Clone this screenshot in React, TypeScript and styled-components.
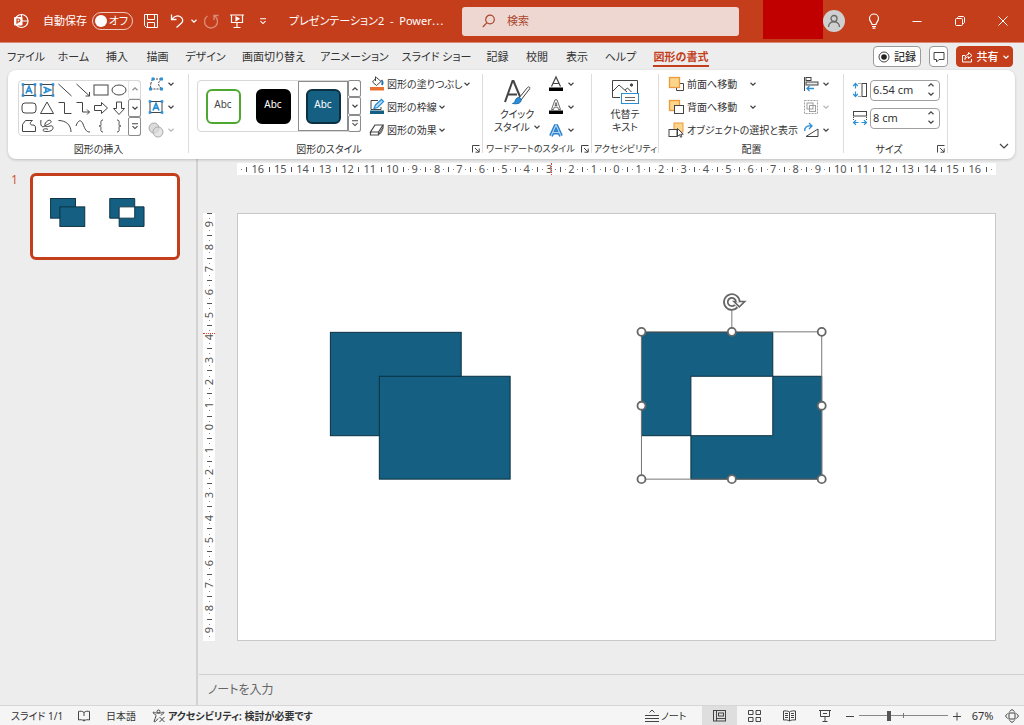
import React from 'react';
import styled, { createGlobalStyle, css } from 'styled-components';

const GlobalStyle = createGlobalStyle`
  *, *::before, *::after { box-sizing: border-box; }
  body {
    margin: 0;
    background: #ededed;
    color: #333;
    font: 11px/14px 'Noto Sans', 'Noto Sans CJK JP', sans-serif;
    font-feature-settings: 'palt' 1;
  }
  button, input {
    font: inherit;
    font-feature-settings: inherit;
    color: inherit;
  }
  svg { display: block; flex: none; overflow: visible; }
`;

const ink = '#444';
const blue = '#2b8fd6';
const accent = '#c43e1c';
const shapeFill = '#156082';

const Page = styled.div`
  display: flex;
  flex-direction: column;
  min-height: 100vh;
`;

const bareButton = css`
  display: flex;
  align-items: center;
  justify-content: center;
  margin: 0;
  padding: 0;
  border: 0;
  background: none;
  white-space: nowrap;
`;

/* ---------- title bar ---------- */

const TitleBar = styled.header`
  display: flex;
  align-items: center;
  height: 43px;
  flex: none;
  padding-left: 13px;
  background: ${accent};
  border-bottom: 1px solid #d98a73;
  color: #fff;
  white-space: nowrap;
`;

const AutoSave = styled.label`
  display: flex;
  align-items: center;
  width: 109px;
  padding-left: 14px;
`;

const AutoSaveText = styled.span`
  width: 49px;
`;

const SwitchBox = styled.span`
  position: relative;
  display: flex;
  align-items: center;
  justify-content: flex-end;
  width: 41px;
  height: 18px;
  padding-right: 4px;
  border: 1px solid #f0c9bd;
  border-radius: 9px;
`;

const SwitchInput = styled.input`
  appearance: none;
  position: absolute;
  left: 2px;
  top: 2px;
  width: 12px;
  height: 12px;
  margin: 0;
  border-radius: 50%;
  background: #fff;
`;

const QuickButton = styled.button<{ $w?: number; $dim?: boolean }>`
  ${bareButton}
  width: ${p => p.$w ?? 26}px;
  height: 26px;
  opacity: ${p => (p.$dim ? 0.4 : 1)};
`;

const DocTitle = styled.h1`
  width: 186px;
  margin: 0;
  padding-left: 13px;
  font-size: 11px;
  font-weight: 400;
  white-space: pre;
`;

const SearchBox = styled.label`
  display: flex;
  align-items: center;
  gap: 12px;
  flex: 1;
  min-width: 120px;
  height: 29px;
  padding-left: 20px;
  border-radius: 3px;
  background: #efd7d1;
  color: #a8452c;
`;

const SearchInput = styled.input`
  flex: 1;
  min-width: 0;
  border: 0;
  padding: 0;
  background: none;
  outline: none;
  &::placeholder { color: #a8452c; opacity: 1; }
`;

const AccountName = styled.div`
  align-self: flex-start;
  width: 60px;
  height: 39px;
  margin-left: 24px;
  background: #c00000;
`;

const Avatar = styled.button`
  ${bareButton}
  width: 22px;
  height: 22px;
  margin-right: 7px;
  border-radius: 50%;
  background: #cfcfcf;
`;

const WindowButton = styled.button`
  ${bareButton}
  width: 43px;
  height: 42px;
`;

/* ---------- tabs ---------- */

const TabBar = styled.nav`
  display: flex;
  align-items: center;
  height: 27px;
  flex: none;
  padding: 0 11px;
`;

const TabList = styled.div`
  display: flex;
  flex: 1;
  gap: 18px;
`;

const Tab = styled.button<{ $w: number; $active?: boolean }>`
  ${bareButton}
  width: ${p => p.$w}px;
  height: 20px;
  flex: none;
  padding-top: 2px;
  border-bottom: 2px solid ${p => (p.$active ? accent : 'transparent')};
  color: ${p => (p.$active ? accent : '#333')};
  font-weight: ${p => (p.$active ? 700 : 400)};
`;

const PillRow = styled.div`
  display: flex;
  gap: 8px;
`;

const Pill = styled.button<{ $w: number; $solid?: boolean }>`
  ${bareButton}
  gap: 4px;
  width: ${p => p.$w}px;
  height: 21px;
  border: 1px solid ${p => (p.$solid ? accent : '#9a9a9a')};
  border-radius: 4px;
  background: ${p => (p.$solid ? accent : '#fff')};
  color: ${p => (p.$solid ? '#fff' : '#333')};
  font-weight: 500;
`;

/* ---------- ribbon ---------- */

const Ribbon = styled.section`
  display: flex;
  height: 89px;
  flex: none;
  margin: 0 9px 0 8px;
  padding: 2px 0;
  border-radius: 8px;
  background: #fff;
  box-shadow: 0 1px 3px #0003;
  position: relative;
`;

const Group = styled.div<{ $w: number }>`
  position: relative;
  display: flex;
  flex-direction: column;
  width: ${p => p.$w}px;
  flex: none;
  &::after {
    content: '';
    position: absolute;
    right: 0;
    top: 2px;
    bottom: 4px;
    width: 1px;
    background: #dcdcdc;
  }
`;

const GroupBody = styled.div<{ $pad: number; $gap?: number }>`
  display: flex;
  align-items: flex-start;
  height: 70px;
  padding-left: ${p => p.$pad}px;
  gap: ${p => p.$gap ?? 8}px;
`;

const GroupLabel = styled.div<{ $small?: boolean }>`
  display: flex;
  align-items: center;
  justify-content: center;
  height: 14px;
  white-space: nowrap;
  font-size: ${p => (p.$small ? 9 : 10)}px;
`;

const LabelText = styled.span`
  flex: 1;
  display: flex;
  justify-content: center;
`;

const Launcher = styled.button`
  ${bareButton}
  width: 14px;
  height: 14px;
`;

const Stack = styled.div`
  display: flex;
  flex-direction: column;
  align-items: flex-start;
`;

const Command = styled.button<{ $w?: number; $gap?: number; $dim?: boolean }>`
  ${bareButton}
  justify-content: flex-start;
  gap: ${p => p.$gap ?? 4}px;
  height: 23px;
  width: ${p => (p.$w ? `${p.$w}px` : 'auto')};
  opacity: ${p => (p.$dim ? 0.7 : 1)};
  font-size: 10px;
`;

const CommandText = styled.span<{ $w?: number }>`
  width: ${p => (p.$w ? `${p.$w}px` : 'auto')};
  text-align: left;
`;

const Gallery = styled.div`
  display: flex;
  margin-top: 8px;
  border: 1px solid #d8d8d8;
  border-radius: 4px;
`;

const ShapeGrid = styled.div`
  display: grid;
  grid-template-columns: repeat(6, 18px);
  grid-auto-rows: 18px;
  padding-left: 1px;
`;

const ShapeButton = styled.button`
  ${bareButton}
`;

const Scroller = styled.div`
  display: grid;
  grid-template-rows: 1fr 1fr 1fr;
  width: 13px;
  margin: -1px -1px -1px 0;
`;

const ScrollButton = styled.button<{ $faint?: boolean }>`
  ${bareButton}
  border: 1px solid ${p => (p.$faint ? '#d8d8d8' : '#8c8c8c')};
  border-radius: 2px;
  opacity: ${p => (p.$faint ? 0.6 : 1)};
`;

const StyleCell = styled.button<{ $selected?: boolean }>`
  ${bareButton}
  width: 50px;
  height: 50px;
  border: 1px solid ${p => (p.$selected ? '#8c8c8c' : 'transparent')};
`;

const StyleSwatch = styled.span<{ $bg: string; $line: string; $fg: string }>`
  width: 35px;
  height: 35px;
  padding-top: 6px;
  border: 2px solid ${p => p.$line};
  border-radius: 6px;
  background: ${p => p.$bg};
  color: ${p => p.$fg};
  font-size: 10px;
  text-align: center;
`;

const BigButton = styled.button<{ $w: number }>`
  ${bareButton}
  flex-direction: column;
  justify-content: flex-start;
  width: ${p => p.$w}px;
  padding-top: 6px;
`;

const BigText = styled.span`
  display: flex;
  align-items: center;
  gap: 4px;
  height: 13px;
  font-size: 10px;
`;

const IconBox = styled.span`
  display: flex;
  height: 29px;
`;

const SizeRows = styled.div`
  padding-top: 4px;
`;

const SizeRow = styled.label`
  display: flex;
  align-items: center;
  gap: 2px;
  height: 28px;
`;

const SizeBox = styled.span`
  display: flex;
  width: 70px;
  height: 21px;
  border: 1px solid #a0a0a0;
  border-radius: 4px;
`;

const SizeInput = styled.input`
  width: 52px;
  border: 0;
  padding: 0 0 0 2px;
  background: none;
  font-size: 11px;
`;

const Spin = styled.span`
  display: grid;
  grid-template-rows: 9px 9px;
  width: 16px;
`;

const SpinButton = styled.button`
  ${bareButton}
`;

const Collapse = styled.button`
  ${bareButton}
  align-self: flex-end;
  width: 22px;
  height: 22px;
  margin-left: auto;
`;

/* ---------- workspace ---------- */

const Workspace = styled.main`
  display: flex;
  flex: 1;
`;

const SlideList = styled.aside`
  display: flex;
  align-items: flex-start;
  width: 198px;
  flex: none;
  padding: 14px 16px 0 11px;
  border-right: 2px solid #d2d2d2;
`;

const SlideNumber = styled.span`
  width: 19px;
  color: #d0593b;
  font-size: 12px;
`;

const Thumb = styled.button`
  display: block;
  flex: 1;
  padding: 0;
  border: 3px solid ${accent};
  border-radius: 6px;
  background: #fff;
`;

const Editor = styled.div`
  display: flex;
  flex-direction: column;
  flex: 1;
  min-width: 0;
`;

const Stage = styled.div`
  display: grid;
  grid-template-columns: 12px 1fr;
  grid-template-rows: 12px auto;
  column-gap: 22px;
  row-gap: 38px;
  flex: 1;
  align-content: start;
  padding: 4px 28px 32px 5px;
`;

const Ruler = styled.div<{ $vertical?: boolean }>`
  position: relative;
  display: flex;
  flex-direction: ${p => (p.$vertical ? 'column' : 'row')};
  grid-column: ${p => (p.$vertical ? 1 : 2)};
  padding: ${p => (p.$vertical ? '0' : '0 4px')};
  background: #fff;
  color: #555;
  font-size: 11px;
  line-height: 12px;
`;

const RulerCell = styled.span<{ $vertical?: boolean; $half?: boolean }>`
  display: flex;
  flex: ${p => (p.$half ? 0.5 : 1)} 1 0;
  flex-direction: ${p => (p.$vertical ? 'column' : 'row')};
  align-items: center;
  justify-content: space-between;
  min-width: 0;
  min-height: 0;
`;

const RulerNumber = styled(RulerCell)`
  justify-content: center;
`;

const Digit = styled.span<{ $vertical?: boolean }>`
  transform: ${p => (p.$vertical ? 'rotate(-90deg)' : 'none')};
`;

const Tick = styled.i<{ $vertical?: boolean }>`
  width: ${p => (p.$vertical ? 5 : 1)}px;
  height: ${p => (p.$vertical ? 1 : 5)}px;
  background: #555;
`;

const Dot = styled.i<{ $off?: boolean }>`
  width: 1px;
  height: 1px;
  background: ${p => (p.$off ? 'transparent' : '#888')};
`;

const TopMarker = styled.i`
  position: absolute;
  z-index: 1;
  left: 41.4%;
  top: 0;
  height: 100%;
  border-left: 1px dotted #f03a20;
`;

const SideMarker = styled.i`
  position: absolute;
  z-index: 1;
  top: 28%;
  left: 0;
  width: 100%;
  border-top: 1px dotted #f03a20;
`;

const Slide = styled.div`
  grid-column: 2;
  border: 1px solid #c9c9c9;
  background: #fff;
`;

const Notes = styled.div`
  display: flex;
  align-items: center;
  height: 31px;
  margin-left: 1px;
  padding-left: 9px;
  border-top: 1px solid #cfcfcf;
`;

const NotesInput = styled.input`
  flex: 1;
  border: 0;
  padding: 0;
  background: none;
  font-size: 12px;
  &::placeholder { color: #666; opacity: 1; }
`;

/* ---------- status bar ---------- */

const StatusBar = styled.footer`
  display: flex;
  align-items: center;
  height: 20px;
  flex: none;
  padding-left: 11px;
  border-top: 1px solid #d6d6d6;
  background: #f5f5f5;
  white-space: nowrap;
`;

const StatusItem = styled.button<{ $w: number; $bold?: boolean }>`
  ${bareButton}
  justify-content: flex-start;
  gap: 2px;
  width: ${p => p.$w}px;
  height: 18px;
  font-weight: ${p => (p.$bold ? 600 : 400)};
  font-size: 10px;
`;

const StatusSpace = styled.span`
  flex: 1;
`;

const ViewButton = styled.button<{ $active?: boolean; $narrow?: boolean }>`
  ${bareButton}
  width: ${p => (p.$narrow ? 24 : 35)}px;
  height: 19px;
  background: ${p => (p.$active ? '#dedede' : 'none')};
`;

const ZoomButton = styled.button`
  ${bareButton}
  width: 16px;
  height: 18px;
`;

const ZoomSlider = styled.input`
  appearance: none;
  width: 89px;
  height: 12px;
  margin: 0 1px;
  background:
    linear-gradient(#777, #777) 50% 50% / 1px 5px no-repeat,
    linear-gradient(#888, #888) 50% 50% / 100% 1px no-repeat;
  &::-webkit-slider-thumb {
    appearance: none;
    width: 4px;
    height: 10px;
    background: #555;
  }
`;

const ZoomValue = styled.button`
  ${bareButton}
  width: 35px;
  font-size: 11px;
`;

/* ---------- icons ---------- */

type IconProps = {
  w?: number;
  h?: number;
  color?: string;
  sw?: number;
  children: React.ReactNode;
};

const Icon = ({ w = 16, h = 16, color = ink, sw = 1, children }: IconProps) => (
  <svg width={w} height={h} viewBox={`0 0 ${w} ${h}`} fill="none" stroke={color} strokeWidth={sw} aria-hidden="true">
    {children}
  </svg>
);

const Chevron = ({ color = ink }: { color?: string }) => (
  <Icon w={6} h={4} color={color} sw={1.2}>
    <path d="M.5.7 3 3.1 5.5.7" />
  </Icon>
);

const ChevronUp = () => (
  <Icon w={6} h={4} sw={1.2}>
    <path d="M.5 3.2 3 .8l2.5 2.4" />
  </Icon>
);

const ChevronBar = ({ color = ink }: { color?: string }) => (
  <Icon w={6} h={7} color={color} sw={1.1}>
    <path d="M0 .8h6M.5 3.2 3 5.6l2.5-2.4" />
  </Icon>
);

const LauncherIcon = () => (
  <Icon w={8} h={8}>
    <path d="M.5 7.5v-7h7M3 3l4 4M7.2 3.5v3.7H3.5" />
  </Icon>
);

const corners = (x1: number, y1: number, x2: number, y2: number) =>
  [[x1, y1], [x2, y1], [x1, y2], [x2, y2]].map(([x, y], i) => (
    <rect key={i} x={x - 1.3} y={y - 1.3} width="2.6" height="2.6" fill={blue} stroke="none" />
  ));

const TextBoxIcon = ({ rotated }: { rotated?: boolean }) => (
  <Icon>
    <rect x="2" y="2.5" width="12" height="11" />
    {corners(2, 2.5, 14, 13.5)}
    <path
      d="M5 11.5 8 4.5l3 7M6 9.2h4"
      stroke={blue}
      strokeWidth="1.7"
      transform={rotated ? 'rotate(90 8 8)' : undefined}
    />
  </Icon>
);

const shapeIcons: [string, React.ReactNode][] = [
  ['テキスト ボックス', <TextBoxIcon />],
  ['縦書きテキスト ボックス', <TextBoxIcon rotated />],
  ['線', <Icon><path d="M1.5 2 14.5 14" /></Icon>],
  ['線矢印', <Icon><path d="M1.5 2 14.5 14M10.5 14h4v-4" /></Icon>],
  ['正方形/長方形', <Icon><rect x="1" y="3" width="14" height="10" /></Icon>],
  ['楕円', <Icon><ellipse cx="8" cy="8" rx="7" ry="5" /></Icon>],
  ['角丸四角形', <Icon><rect x="1" y="3" width="14" height="10" rx="3" /></Icon>],
  ['三角形', <Icon><path d="M8 2 14.5 13.5h-13z" /></Icon>],
  ['カギ線コネクタ', <Icon><path d="M1.5 2.5h6v11h7" /></Icon>],
  ['カギ線矢印', <Icon><path d="M1.5 2.5h6V12h7M12 9.5l2.5 2.5-2.5 2.5" /></Icon>],
  ['右矢印', <Icon><path d="M1.5 5.5h7v-3L14.500 8l-6 5.500v-3h-7z" /></Icon>],
  ['下矢印', <Icon><path d="M5.5 2v6.500h-3l5.500 6 5.500-6h-3V2z" /></Icon>],
  ['フリーフォーム', <Icon><path d="M4.5 2.500h7c-3 2-3 4.500 0 4.500 2.500 0 3 1 3 3v3.500h-13V6.500z" /></Icon>],
  ['フリーハンド', <Icon><path d="M2 2c-1 6 1 8 4 6s7-3 6-5-5 0-6 3 2 3 5 2 4 2 2 4-8 2-9 .5 4-2.500 5-1" /></Icon>],
  ['円弧', <Icon><path d="M1.5 2.500C9 2.500 14 7 14 14" /></Icon>],
  ['曲線', <Icon><path d="M1 8C3 2 6 1 8 6s3 8 7 8" /></Icon>],
  ['左中かっこ', <Icon><path d="M10 2C7 2 8 5 8 6.500S7 8 6 8c1 0 2 0 2 1.500S7 14 10 14" /></Icon>],
  ['右中かっこ', <Icon><path d="M6 2c3 0 2 3 2 4.500S9 8 10 8c-1 0-2 0-2 1.500S9 14 6 14" /></Icon>],
];

const EditShapeIcon = () => (
  <Icon>
    <path d="M2.500 13C2.500 8 3 5 5 3" strokeDasharray="3 1" />
    <path d="M5 3h8.500M13.500 3c-4 4-4 5 0 10M2.500 13h11" strokeDasharray="2 1" />
    {corners(5, 3, 13.5, 3)}
    {corners(2.5, 13, 13.5, 13)}
  </Icon>
);

const MergeIcon = () => (
  <Icon color="#888">
    <circle cx="6" cy="6" r="5" fill="#ccc" />
    <circle cx="10" cy="10" r="5" fill="#ccc" fillOpacity=".7" />
  </Icon>
);

const FillIcon = () => (
  <Icon>
    <path d="M7.500 1.500 12 5.500 7.500 9.500 3.500 6zM6.500 .5v4.500" />
    <path d="M12.500 4c1.300 1.500 1.300 3.500.4 5" stroke="#1e6fb0" strokeWidth="1.800" />
    <rect x="1" y="11" width="14" height="3.500" fill="#e97132" stroke="none" />
  </Icon>
);

const OutlineIcon = () => (
  <Icon>
    <path d="M9 1.500H2V10.500h10V8" />
    <path d="M5 9.500 6.500 6 12.500 .5 14.500 2.500 8.500 8.500z" stroke={blue} fill="#bfe0f7" strokeWidth="1.300" />
    <rect x="1" y="11.500" width="14" height="3.500" fill={shapeFill} stroke="none" />
  </Icon>
);

const EffectIcon = () => (
  <Icon sw={1.2}>
    <path d="M6 3h8L9.500 10H1.500z" />
    <path d="M1.500 10v3h8L14 6V3M9.500 10v3" />
    <path d="m11 11.500 2.500-4.500" strokeWidth="2" stroke="#777" />
  </Icon>
);

const QuickStyleIcon = () => (
  <Icon w={28} h={28}>
    <path d="M2 24 9.500 3h1L18 21M5 16.500h9" strokeWidth="2" />
    <path d="m16 20 8.500-10.500c1.500-1.500 3 0 2 1.500L18 22z" fill="#fff" />
    <path d="M16 19.500c2 .5 3 2 1.500 4.500-1.500 2-5 2-8 1.500 2-.5 2.500-2 3-3.500s2-2.500 3.500-2.500z" fill={blue} stroke="#1e6fb0" />
  </Icon>
);

const LetterA = ({ kind }: { kind: 'fill' | 'outline' | 'effect' }) => (
  <Icon>
    {kind === 'fill' && <path d="M3.500 10.500 8 1l4.500 9.500M5.300 7.500h5.400" strokeWidth="1.200" />}
    {kind === 'outline' && (
      <path d="M3.500 10.500 7 .8h2l3.500 9.700h-2l-.8-2.300H6.300l-.8 2.300zM7 6.500h2l-1-3z" strokeWidth=".8" />
    )}
    {kind === 'effect' ? (
      <g strokeLinejoin="bevel">
        <path d="M3 14 8 3l5 11M5 10.500h6" stroke="#2b7fcb" strokeWidth="4" />
        <path d="M3 14 8 3l5 11M5 10.500h6" stroke="#a9d5f5" strokeWidth="1.200" />
      </g>
    ) : (
      <rect x="1" y="11.500" width="14" height="3.500" fill="#000" stroke="none" />
    )}
  </Icon>
);

const AltTextIcon = () => (
  <Icon w={28} h={28}>
    <path d="M9 19.500H1.500V2.500h25V15" />
    <path d="m2 13 6-6 8 7M14 12l2.500-2 4 4" />
    <circle cx="20.500" cy="7" r="1.200" fill={ink} />
    <rect x="10.500" y="15.500" width="17" height="10" fill="#fff" stroke={blue} />
    <path d="M14 19.500h10M14 22.500h10" stroke="#666" />
  </Icon>
);

const ForwardIcon = () => (
  <Icon>
    <path d="M11.500 7.500h4v7h-7v-3" />
    <rect x="1.500" y="1.500" width="10" height="10" fill="#fbd58a" stroke="#ec9a3c" strokeWidth="1.300" />
  </Icon>
);

const BackwardIcon = () => (
  <Icon>
    <rect x="1.500" y="1.500" width="10" height="10" fill="#fbd58a" stroke="#ec9a3c" strokeWidth="1.300" />
    <rect x="6.500" y="6.500" width="9" height="8" fill="#fff" />
  </Icon>
);

const SelectionIcon = () => (
  <Icon>
    <rect x="6" y="1" width="9" height="9" fill="#fbd58a" stroke="#ec9a3c" />
    <rect x="1" y="7.500" width="8" height="7" fill="#fff" />
    <path d="M9.500 6.500v8l2-1.800 1.200 2.600 1.200-.6-1.200-2.500h2.600z" fill="#fff" />
  </Icon>
);

const AlignIcon = () => (
  <Icon>
    <path d="M1.500 1v14" />
    <rect x="3" y="1.500" width="5" height="3" />
    <rect x="3" y="6" width="12" height="3" fill="#e8e8e8" />
    <path d="M11 12.500H4M6.500 10 4 12.500 6.500 15" stroke={blue} strokeWidth="1.300" />
  </Icon>
);

const GroupIcon = () => (
  <Icon color="#777">
    <rect x="1.500" y="1.500" width="13" height="13" strokeDasharray="2 1" />
    <rect x="4" y="4" width="6" height="6" />
    <rect x="6.500" y="6.500" width="6" height="6" />
  </Icon>
);

const RotateIcon = () => (
  <Icon>
    <path d="M3 14.500h12V7z" />
    <path d="M2 9C1 5.500 4 3.500 8 4M6 1l3 3-3 3" stroke={blue} strokeWidth="1.300" />
  </Icon>
);

const HeightIcon = () => (
  <Icon>
    <path d="M3.500 2v4.500M3.500 9.500V14M1.200 4l2.300-2.500L5.800 4M1.200 12l2.300 2.500L5.800 12" stroke={blue} strokeWidth="1.200" />
    <path d="M6.500 1.500h2.500M6.500 14.500h2.500" strokeDasharray="1 1" />
    <rect x="10" y="1.500" width="4.500" height="13" />
  </Icon>
);

const WidthIcon = () => (
  <Icon>
    <rect x="1.500" y="1.500" width="13" height="4.500" />
    <path d="M1.500 7v4M14.500 7v4" strokeDasharray="1 1" />
    <path d="M2 12.500h4.500M9.500 12.500H14M4 10.200l-2.500 2.300L4 14.800M12 10.200l2.500 2.300-2.500 2.300" stroke={blue} strokeWidth="1.200" />
  </Icon>
);

const AppLogo = () => (
  <Icon color="#fff" sw={1.2}>
    <circle cx="8.500" cy="8" r="6.500" />
    <path d="M8.500 1.500V8H15" />
    <rect x="1" y="4" width="8.500" height="8.500" rx="1" fill="#fff" stroke="none" />
    <path d="M4 10.800V6h1.500a1.400 1.400 0 0 1 0 2.800H4" stroke={accent} />
  </Icon>
);

/* ---------- slide drawing ---------- */

const SlideShapes = ({ line = 1 }: { line?: number }) => (
  <g fill={shapeFill} stroke="#0b3041" strokeWidth={line}>
    <rect x="92.500" y="118.500" width="131" height="103.500" />
    <rect x="141.500" y="162.500" width="131" height="103" />
    <path
      fillRule="evenodd"
      d="M404 118.500H535.500v44h49v103H453.500v-43.500H404zM453.500 162.500v59.500h82v-59.500z"
    />
  </g>
);

const handles = [
  [404, 118], [494.5, 118], [584.5, 118],
  [404, 192], [584.5, 192],
  [404, 265.5], [494.5, 265.5], [584.5, 265.5],
];

const SlideDrawing = () => (
  <svg width="100%" viewBox="0 0 758 427" role="img" aria-label="スライド 1">
    <SlideShapes />
    <g fill="none" stroke="#777">
      <rect x="404" y="118" width="180.500" height="147.500" />
      <path d="M494.500 96v22" />
    </g>
    {handles.map(([x, y]) => (
      <circle key={`${x}-${y}`} cx={x} cy={y} r="4" fill="#fff" stroke="#666" strokeWidth="1.800" />
    ))}
    <g fill="none">
      <path d="M498.900 92.300A6 6 0 1 1 500.500 88" stroke="#666" strokeWidth="5.500" />
      <path d="M496.500 87.500h11l-5.500 5.500z" fill="#fff" stroke="#666" strokeWidth="1.500" />
      <path d="M498.500 92.500A6 6 0 1 1 500.500 88" stroke="#fff" strokeWidth="2" />
    </g>
  </svg>
);

const steps = (n: number) => Array.from({ length: n * 2 + 1 }, (_, i) => Math.abs(i - n));

const RulerScale = ({ max, vertical }: { max: number; vertical?: boolean }) => {
  const values = steps(max);
  return (
    <Ruler $vertical={vertical}>
      <RulerCell $vertical={vertical} $half={vertical}>
        {!vertical && <Dot />}
        <Tick $vertical={vertical} />
        <Dot $off={!vertical} />
      </RulerCell>
      {values.map((n, i) => (
        <React.Fragment key={i}>
          <RulerNumber $vertical={vertical}>
            <Digit $vertical={vertical}>{n}</Digit>
          </RulerNumber>
          {i < values.length - 1 && (
            <RulerCell $vertical={vertical}>
              <Dot $off={n > 9} />
              <Tick $vertical={vertical} />
              <Dot $off={values[i + 1] > 9} />
            </RulerCell>
          )}
        </React.Fragment>
      ))}
      <RulerCell $vertical={vertical} $half={vertical}>
        <Dot $off={!vertical} />
        {!vertical && <Tick />}
        {!vertical && <Dot />}
      </RulerCell>
      {vertical ? <SideMarker /> : <TopMarker />}
    </Ruler>
  );
};

/* ---------- data ---------- */

const tabs: [string, number][] = [
  ['ファイル', 30], ['ホーム', 29], ['挿入', 22], ['描画', 23], ['デザイン', 37],
  ['画面切り替え', 63], ['アニメーション', 63], ['スライド ショー', 65], ['記録', 21],
  ['校閲', 22], ['表示', 22], ['ヘルプ', 29], ['図形の書式', 56],
];

const styleItems = [
  { bg: '#fff', line: '#4ea72e', fg: '#444' },
  { bg: '#000', line: '#000', fg: '#fff' },
  { bg: shapeFill, line: '#0b3041', fg: '#fff', selected: true },
];

const GalleryScroll = ({ atTop }: { atTop?: boolean }) => (
  <Scroller>
    <ScrollButton $faint={atTop} aria-label="上へ"><ChevronUp /></ScrollButton>
    <ScrollButton aria-label="下へ"><Chevron /></ScrollButton>
    <ScrollButton aria-label="その他"><ChevronBar /></ScrollButton>
  </Scroller>
);

const SizeField = ({ label, value, icon }: { label: string; value: string; icon: React.ReactNode }) => (
  <SizeRow>
    {icon}
    <SizeBox>
      <SizeInput aria-label={label} defaultValue={value} />
      <Spin>
        <SpinButton aria-label={`${label}を増やす`}><ChevronUp /></SpinButton>
        <SpinButton aria-label={`${label}を減らす`}><Chevron /></SpinButton>
      </Spin>
    </SizeBox>
  </SizeRow>
);

export default function App() {
  return (
    <Page>
      <GlobalStyle />
      <TitleBar>
        <AppLogo />
        <AutoSave>
          <AutoSaveText>自動保存</AutoSaveText>
          <SwitchBox>
            <SwitchInput type="checkbox" role="switch" />
            オフ
          </SwitchBox>
        </AutoSave>
        <QuickButton aria-label="上書き保存">
          <Icon color="#fff">
            <path d="M1.500 1.500h13v13h-11l-2-2zM4.500 1.500v5h7v-5M4.500 14.500v-5h7v5" />
          </Icon>
        </QuickButton>
        <QuickButton aria-label="元に戻す">
          <Icon color="#fff" sw={1.3}>
            <path d="M2.500 1.500v5h5M2.800 6.200C5 3.500 8 2 11 3.500s3.500 4.500 1.500 6.500L7.500 14.500" />
          </Icon>
        </QuickButton>
        <QuickButton $w={8} aria-label="元に戻す一覧"><Chevron color="#fff" /></QuickButton>
        <QuickButton $dim aria-label="繰り返し">
          <Icon color="#fff" sw={1.3}>
            <path d="M4.500 3a6.500 6.500 0 1 0 7 0M11 7V2.500h4.500" />
          </Icon>
        </QuickButton>
        <QuickButton aria-label="最初から開始">
          <Icon color="#fff" sw={1.2}>
            <path d="M1 2h14M2.500 2v7.500h11V2M8 9.500v4.500M4.500 14.500h7" />
            <path d="m7 4 3 1.800-3 1.800z" fill="#fff" />
          </Icon>
        </QuickButton>
        <QuickButton aria-label="ツール バーのカスタマイズ"><ChevronBar color="#fff" /></QuickButton>
        <DocTitle>プレゼンテーション2  -  Power⋯</DocTitle>
        <SearchBox>
          <Icon w={13} h={14} color="#a8452c" sw={1.2}>
            <circle cx="8" cy="5.500" r="4.300" />
            <path d="M5 8.700.8 13" />
          </Icon>
          <SearchInput type="text" placeholder="検索" aria-label="検索" />
        </SearchBox>
        <AccountName />
        <Avatar aria-label="アカウント">
          <Icon w={14} h={14} color="#666" sw={1.3}>
            <circle cx="7" cy="4.500" r="3" />
            <path d="M1.500 13c0-7 11-7 11 0" />
          </Icon>
        </Avatar>
        <WindowButton aria-label="ヒント">
          <Icon w={12} h={16} color="#fff" sw={1.2}>
            <path d="M4 11.500C4 9.500 1.500 8.500 1.500 5.500a4.500 4.500 0 0 1 9 0c0 3-2.500 4-2.500 6zM4 13.500h4M4.500 15.200h3" />
          </Icon>
        </WindowButton>
        <WindowButton aria-label="最小化">
          <Icon w={10} h={10} color="#fff"><path d="M.5 5.500h9" /></Icon>
        </WindowButton>
        <WindowButton aria-label="元に戻す（縮小）">
          <Icon w={10} h={10} color="#fff">
            <rect x=".5" y="2.500" width="7" height="7" rx="1" />
            <path d="M2.500 2.500v-1l1-1h5l1 1v5l-1 1h-1" />
          </Icon>
        </WindowButton>
        <WindowButton aria-label="閉じる">
          <Icon w={10} h={10} color="#fff"><path d="m.5.5 9 9M9.500.5l-9 9" /></Icon>
        </WindowButton>
      </TitleBar>

      <TabBar>
        <TabList>
          {tabs.map(([name, w]) => (
            <Tab key={name} $w={w} $active={name === '図形の書式'}>{name}</Tab>
          ))}
        </TabList>
        <PillRow>
          <Pill $w={48}>
            <Icon w={12} h={12}>
              <circle cx="6" cy="6" r="5" />
              <circle cx="6" cy="6" r="2.800" fill="#222" stroke="none" />
            </Icon>
            記録
          </Pill>
          <Pill $w={19} aria-label="コメント">
            <Icon w={12} h={12}><path d="M1 1.500h10v7H6L3.500 11V8.500H1z" /></Icon>
          </Pill>
          <Pill $w={57} $solid>
            <Icon w={12} h={12} color="#fff">
              <path d="M4 4.500H1.500v6.500h9V8" />
              <path d="M7.500 1.500 11 4.500 7.500 7.500V5.800C5.500 5.800 4.500 7 4 8.500c0-3 1-5 3.500-5.200z" />
            </Icon>
            共有
            <Chevron color="#fff" />
          </Pill>
        </PillRow>
      </TabBar>

      <Ribbon>
        <Group $w={181}>
          <GroupBody $pad={10} $gap={7}>
            <Gallery>
              <ShapeGrid>
                {shapeIcons.map(([name, icon]) => (
                  <ShapeButton key={name} aria-label={name}>{icon}</ShapeButton>
                ))}
              </ShapeGrid>
              <GalleryScroll atTop />
            </Gallery>
            <Stack>
              <Command aria-label="図形の編集"><EditShapeIcon /><Chevron /></Command>
              <Command aria-label="テキスト ボックスの作成"><TextBoxIcon /><Chevron /></Command>
              <Command $dim aria-label="図形の結合"><MergeIcon /><Chevron color="#999" /></Command>
            </Stack>
          </GroupBody>
          <GroupLabel>図形の挿入</GroupLabel>
        </Group>

        <Group $w={294}>
          <GroupBody $pad={8}>
            <Gallery>
              {styleItems.map(s => (
                <StyleCell key={s.bg} $selected={s.selected}>
                  <StyleSwatch $bg={s.bg} $line={s.line} $fg={s.fg}>Abc</StyleSwatch>
                </StyleCell>
              ))}
              <GalleryScroll />
            </Gallery>
            <Stack>
              <Command $gap={2}><FillIcon />図形の塗りつぶし<Chevron /></Command>
              <Command $gap={2}><OutlineIcon />図形の枠線<Chevron /></Command>
              <Command $gap={2}><EffectIcon />図形の効果<Chevron /></Command>
            </Stack>
          </GroupBody>
          <GroupLabel>
            <LabelText>図形のスタイル</LabelText>
            <Launcher aria-label="図形の書式設定"><LauncherIcon /></Launcher>
          </GroupLabel>
        </Group>

        <Group $w={109}>
          <GroupBody $pad={11}>
            <BigButton $w={46}>
              <IconBox><QuickStyleIcon /></IconBox>
              <BigText>クイック</BigText>
              <BigText>スタイル<Chevron /></BigText>
            </BigButton>
            <Stack>
              <Command aria-label="文字の塗りつぶし"><LetterA kind="fill" /><Chevron /></Command>
              <Command aria-label="文字の輪郭"><LetterA kind="outline" /><Chevron /></Command>
              <Command aria-label="文字の効果"><LetterA kind="effect" /><Chevron /></Command>
            </Stack>
          </GroupBody>
          <GroupLabel $small>
            <LabelText>ワードアートのスタイル</LabelText>
            <Launcher aria-label="文字の効果の設定"><LauncherIcon /></Launcher>
          </GroupLabel>
        </Group>

        <Group $w={67}>
          <GroupBody $pad={10}>
            <BigButton $w={46}>
              <IconBox><AltTextIcon /></IconBox>
              <BigText>代替テ</BigText>
              <BigText>キスト</BigText>
            </BigButton>
          </GroupBody>
          <GroupLabel $small>アクセシビリティ</GroupLabel>
        </Group>

        <Group $w={185}>
          <GroupBody $pad={9} $gap={0}>
            <Stack>
              <Command $w={135} $gap={3}><ForwardIcon /><CommandText $w={60}>前面へ移動</CommandText><Chevron /></Command>
              <Command $w={135} $gap={3}><BackwardIcon /><CommandText $w={60}>背面へ移動</CommandText><Chevron /></Command>
              <Command $w={135} $gap={3}><SelectionIcon />オブジェクトの選択と表示</Command>
            </Stack>
            <Stack>
              <Command aria-label="配置"><AlignIcon /><Chevron /></Command>
              <Command $dim aria-label="グループ化"><GroupIcon /><Chevron color="#999" /></Command>
              <Command aria-label="回転"><RotateIcon /><Chevron /></Command>
            </Stack>
          </GroupBody>
          <GroupLabel>配置</GroupLabel>
        </Group>

        <Group $w={104}>
          <GroupBody $pad={8}>
            <SizeRows>
              <SizeField label="高さ" value="6.54 cm" icon={<HeightIcon />} />
              <SizeField label="幅" value="8 cm" icon={<WidthIcon />} />
            </SizeRows>
          </GroupBody>
          <GroupLabel>
            <LabelText>サイズ</LabelText>
            <Launcher aria-label="配置とサイズ"><LauncherIcon /></Launcher>
          </GroupLabel>
        </Group>

        <Collapse aria-label="リボンを折りたたむ">
          <Icon w={10} h={6} sw={1.2}><path d="m1 1 4 4 4-4" /></Icon>
        </Collapse>
      </Ribbon>

      <Workspace>
        <SlideList>
          <SlideNumber>1</SlideNumber>
          <Thumb aria-label="スライド 1">
            <svg width="100%" viewBox="0 0 758 428" aria-hidden="true">
              <SlideShapes line={5} />
            </svg>
          </Thumb>
        </SlideList>
        <Editor>
          <Stage>
            <RulerScale max={16} />
            <RulerScale max={9} vertical />
            <Slide><SlideDrawing /></Slide>
          </Stage>
          <Notes>
            <NotesInput type="text" placeholder="ノートを入力" aria-label="ノートを入力" />
          </Notes>
        </Editor>
      </Workspace>

      <StatusBar>
        <StatusItem $w={66}>スライド 1/1</StatusItem>
        <StatusItem $w={29} aria-label="スペル チェック">
          <Icon w={14} h={12}>
            <path d="M7 2.500C5.500 1 3 1 1.500 1.500v8.500c1.500-.5 4-.5 5.500 1 1.500-1.500 4-1.500 5.500-1V1.500C11 1 8.500 1 7 2.500zM7 2.500V6M7 9v2" />
          </Icon>
        </StatusItem>
        <StatusItem $w={46}>日本語</StatusItem>
        <StatusItem $w={180} $bold>
          <Icon w={14} h={14}>
            <circle cx="6.500" cy="2.500" r="1.500" />
            <path d="M1 3.500c0 1.500 3 1.500 3 3s-1.500 4-2 6c1 1 2-.5 4-3M12 3.500c0 1.500-3 1.500-3 3M1 3.500c1-1 2 .5 3.500.5h4c1.500 0 2.500-1.500 3.500-.5M7.500 8l5 5M12.500 8l-5 5" />
          </Icon>
          アクセシビリティ: 検討が必要です
        </StatusItem>
        <StatusSpace />
        <StatusItem $w={57}>
          <Icon w={14} h={14}>
            <path d="M4.500 3.500 7 1l2.500 2.500M0 6.500h14M0 9.500h14M0 12.500h14" />
          </Icon>
          ノート
        </StatusItem>
        <ViewButton $active aria-label="標準">
          <Icon w={13} h={12}>
            <rect x=".5" y=".5" width="12" height="10.500" />
            <path d="M3.500.5V11M3.500 8.500h9" />
            <rect x="5.500" y="3" width="5" height="3" />
          </Icon>
        </ViewButton>
        <ViewButton aria-label="スライド一覧">
          <Icon w={13} h={12}>
            <path d="M.5.5h4.500v4H.5zM8 .5h4.500v4H8zM.5 7.500h4.500v4H.5zM8 7.500h4.500v4H8z" />
          </Icon>
        </ViewButton>
        <ViewButton aria-label="閲覧表示">
          <Icon w={13} h={12}>
            <path d="M6.500 2C5 .8 2.500.8.5 1v9c2-.2 4.500-.2 6 1 1.500-1.200 4-1.200 6-1V1c-2-.2-4.500-.2-6 1zM6.500 2v9M2 3.500h3M2 5.500h3M2 7.500h3M8 3.500h3M8 5.500h3M8 7.500h3" />
          </Icon>
        </ViewButton>
        <ViewButton aria-label="スライド ショー">
          <Icon w={12} h={12}>
            <path d="M0 .5h12M1.500.5v6h9v-6M6 6.500v5M3.500 11.500h5M4 3.500h4" />
          </Icon>
        </ViewButton>
        <ZoomButton aria-label="縮小"><Icon w={8} h={8}><path d="M0 4.500h8" /></Icon></ZoomButton>
        <ZoomSlider type="range" min={0} max={100} defaultValue={33} aria-label="ズーム" />
        <ZoomButton aria-label="拡大"><Icon w={8} h={8}><path d="M0 4.500h8M4 .5v8" /></Icon></ZoomButton>
        <ZoomValue>67%</ZoomValue>
        <ViewButton $narrow aria-label="ウィンドウに合わせる">
          <Icon w={14} h={14}>
            <rect x="4" y="4" width="6" height="6" />
            <path d="M4.500 2.500 7 .5l2.500 2M4.500 11.500l2.500 2 2.500-2M2.500 4.500.5 7l2 2.500M11.500 4.500l2 2.500-2 2.500" />
          </Icon>
        </ViewButton>
      </StatusBar>
    </Page>
  );
}
